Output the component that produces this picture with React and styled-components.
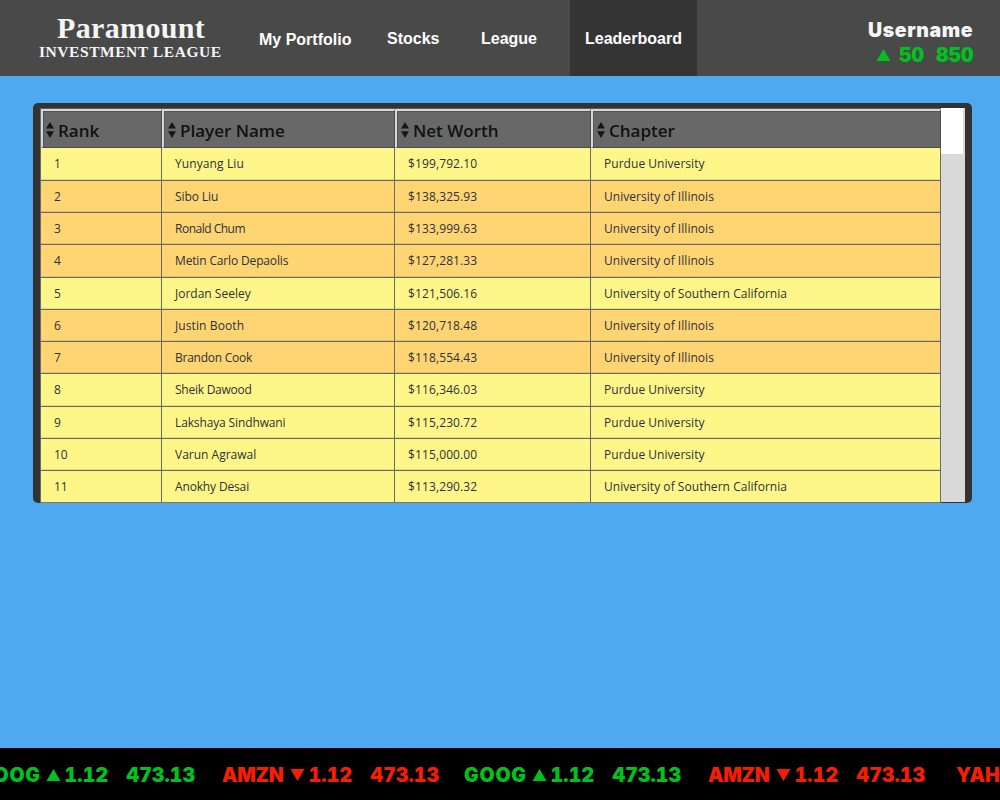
import React from 'react';
import styled, { createGlobalStyle } from 'styled-components';

const GREEN = '#00c21f';
const RED = '#f51f00';

const GlobalStyle = createGlobalStyle`
  body {
    margin: 0;
    background: #4fa9f0;
    font-family: "Liberation Sans", sans-serif;
  }
`;

const Page = styled.div`
  display: flex;
  flex-direction: column;
  width: 1000px;
  height: 800px;
  overflow: hidden;
`;

const Header = styled.header`
  display: flex;
  flex: none;
  height: 76px;
  background: #494949;
`;

const Brand = styled.div`
  width: 244px;
  padding-top: 11px;
  color: #f5f5f5;
  font-family: "Liberation Serif", serif;
  font-weight: bold;
  white-space: nowrap;
`;

const BrandName = styled.div`
  padding-left: 57px;
  font-size: 30px;
  line-height: 34px;
  letter-spacing: 0.35px;
`;

const BrandSub = styled.div`
  padding-left: 39px;
  font-size: 15.5px;
  line-height: 14px;
  letter-spacing: 0.55px;
`;

const Nav = styled.nav`
  display: flex;
`;

const NavItem = styled.a`
  box-sizing: border-box;
  width: ${(p) => p.$width}px;
  margin-right: ${(p) => p.$gap || 0}px;
  padding: ${(p) => (p.$low ? 31 : 30)}px 0 0 15px;
  background: ${(p) => (p.$active ? '#343434' : 'transparent')};
  color: #fff;
  font-size: 16px;
  font-weight: bold;
  line-height: 18px;
  white-space: nowrap;
`;

const Heavy = styled.span`
  font-family: Inter, sans-serif;
  font-size: 19.5px;
  font-weight: 900;
  font-variant-numeric: tabular-nums;
  line-height: 24px;
  letter-spacing: ${(p) => p.$ls || 0}px;
  white-space: nowrap;
`;

const Account = styled.div`
  display: flex;
  flex-direction: column;
  align-items: flex-start;
  margin-left: auto;
  width: 132px;
  padding-top: 18px;
  color: #f5f5f5;
`;

const Score = styled.div`
  display: flex;
  align-items: center;
  height: 25px;
  padding: 0 0 0 8px;
  color: ${GREEN};
`;

const Points = styled(Heavy)`
  width: 37px;
  margin-left: ${(p) => p.$left || 0}px;
`;

const Triangle = styled.svg`
  display: block;
  width: 15px;
  height: 12px;
  fill: currentColor;
`;

const Main = styled.main`
  flex: 1;
  padding: 27px 28px 0 33px;
`;

const Panel = styled.section`
  box-sizing: border-box;
  display: flex;
  height: 400px;
  padding: 5px 7px 0 7px;
  border-radius: 5px;
  background: #333;
  overflow: hidden;
`;

const Table = styled.div`
  box-sizing: border-box;
  width: 901px;
  height: 395px;
  border-left: 1px solid #6b6b6b;
  border-bottom: 1px solid #77755f;
  overflow: hidden;
`;

const Row = styled.div`
  box-sizing: border-box;
  display: grid;
  grid-template-columns: 121px 233px 196px 350px;
  grid-template-rows: 100%;
  height: 32.3px;
  background: ${(p) => (p.$orange ? '#ffd573' : '#fff68a')};
`;

const HeadRow = styled(Row)`
  height: 40.4px;
  border-top: 1px solid #5a5a5a;
  background: #686868;
`;

const HeadCell = styled.div`
  display: flex;
  align-items: center;
  padding: 4px 0 0 3px;
  border-top: 2px solid #d8d8d8;
  border-left: 2px solid #d8d8d8;
  border-right: 1px solid #4c4c4c;
  border-bottom: 1px solid #4c4c4c;
  box-shadow: inset 1px 1px 0 #555;
  color: #111;
  font-family: "Open Sans", sans-serif;
  font-size: 17px;
  font-weight: 600;
  line-height: 24px;
  white-space: nowrap;

  &:first-child {
    padding-left: 2px;
  }
`;

const SortIcon = styled.svg`
  flex: none;
  width: 8px;
  height: 16px;
  margin: -3px 4px 0 1px;
  fill: #161616;
`;

const Cell = styled.div`
  padding-left: 13px;
  border-right: 1px solid #6a6a64;
  border-bottom: 1px solid #6a6a64;
  box-shadow: inset 0 -1px 0 rgba(90, 90, 90, 0.18);
  color: #2b3338;
  font-family: "Open Sans", sans-serif;
  font-size: 12px;
  font-weight: 450;
  letter-spacing: ${(p) => p.$ls || 0}px;
  line-height: 32.6px;
  white-space: nowrap;
`;

const ScrollTrack = styled.div`
  flex: none;
  width: 24px;
  height: 394px;
  background: #d9d9d9;
`;

const ScrollThumb = styled.div`
  width: 22px;
  height: 46px;
  background: #fff;
`;

const Ticker = styled.footer`
  display: flex;
  flex: none;
  align-items: center;
  height: 52px;
  padding-left: 222px;
  background: #000;
  box-sizing: border-box;
  overflow: hidden;
`;

const Quote = styled.div`
  display: grid;
  flex: none;
  grid-template-columns: 67.5px 19px 62px auto;
  align-items: center;
  width: ${(p) => p.$width}px;
  margin-left: ${(p) => p.$shift || 0}px;
  padding-top: 2px;
  color: ${(p) => (p.$up ? GREEN : RED)};
`;

const COLUMNS = ['Rank', 'Player Name', 'Net Worth', 'Chapter'];

const P = 'Purdue University';
const I = 'University of Illinois';
const S = 'University of Southern California';

const PLAYERS = [
  ['Yunyang Liu', '$199,792.10', P, 0.1],
  ['Sibo Liu', '$138,325.93', I, -0.1],
  ['Ronald Chum', '$133,999.63', I, -0.5],
  ['Metin Carlo Depaolis', '$127,281.33', I, -0.15],
  ['Jordan Seeley', '$121,506.16', S, 0],
  ['Justin Booth', '$120,718.48', I, 0.1],
  ['Brandon Cook', '$118,554.43', I, -0.25],
  ['Sheik Dawood', '$116,346.03', P, -0.25],
  ['Lakshaya Sindhwani', '$115,230.72', P, -0.13],
  ['Varun Agrawal', '$115,000.00', P, 0],
  ['Anokhy Desai', '$113,290.32', S, -0.15],
];

const QUOTES = [
  { symbol: 'GOOG', up: true, width: 244, shift: -244 },
  { symbol: 'AMZN', up: false, width: 242 },
  { symbol: 'GOOG', up: true, width: 244 },
  { symbol: 'AMZN', up: false, width: 248 },
];

const Arrow = ({ up }) => (
  <Triangle viewBox="0 0 15 12">
    <path d={up ? 'M7.5 0L14.5 12H.5z' : 'M.5 0H14.5L7.5 12z'} />
  </Triangle>
);

const Sort = () => (
  <SortIcon viewBox="0 0 8 16">
    <path d="M4 0L8 6.6H0zM0 9.2H8L4 16z" />
  </SortIcon>
);

export default function App() {
  return (
    <Page>
      <GlobalStyle />
      <Header>
        <Brand>
          <BrandName>Paramount</BrandName>
          <BrandSub>INVESTMENT LEAGUE</BrandSub>
        </Brand>
        <Nav>
          <NavItem $width={122} $gap={6} $low>My Portfolio</NavItem>
          <NavItem $width={82} $gap={12}>Stocks</NavItem>
          <NavItem $width={86} $gap={18}>League</NavItem>
          <NavItem $width={127} $active>Leaderboard</NavItem>
        </Nav>
        <Account>
          <Heavy $ls={0.6}>Username</Heavy>
          <Score>
            <Arrow up />
            <Points $left={8} $ls={-0.1}>50</Points>
            <Points $ls={-0.1}>850</Points>
          </Score>
        </Account>
      </Header>
      <Main>
        <Panel>
          <Table>
            <HeadRow>
              {COLUMNS.map((label) => (
                <HeadCell key={label}>
                  <Sort />
                  {label}
                </HeadCell>
              ))}
            </HeadRow>
            {PLAYERS.map(([name, worth, chapter, ls], i) => (
              <Row key={name} $orange={chapter === I}>
                <Cell>{i + 1}</Cell>
                <Cell $ls={ls}>{name}</Cell>
                <Cell $ls={0.12}>{worth}</Cell>
                <Cell $ls={0.04}>{chapter}</Cell>
              </Row>
            ))}
          </Table>
          <ScrollTrack>
            <ScrollThumb />
          </ScrollTrack>
        </Panel>
      </Main>
      <Ticker>
        {QUOTES.map((q, i) => (
          <Quote key={i} $up={q.up} $width={q.width} $shift={q.shift}>
            <Heavy $ls={q.up ? 0.8 : -0.3}>{q.symbol}</Heavy>
            <Arrow up={q.up} />
            <Heavy $ls={0.2}>1.12</Heavy>
            <Heavy $ls={0.1}>473.13</Heavy>
          </Quote>
        ))}
        <Quote $width={244}>
          <Heavy>YAHOO</Heavy>
        </Quote>
      </Ticker>
    </Page>
  );
}
